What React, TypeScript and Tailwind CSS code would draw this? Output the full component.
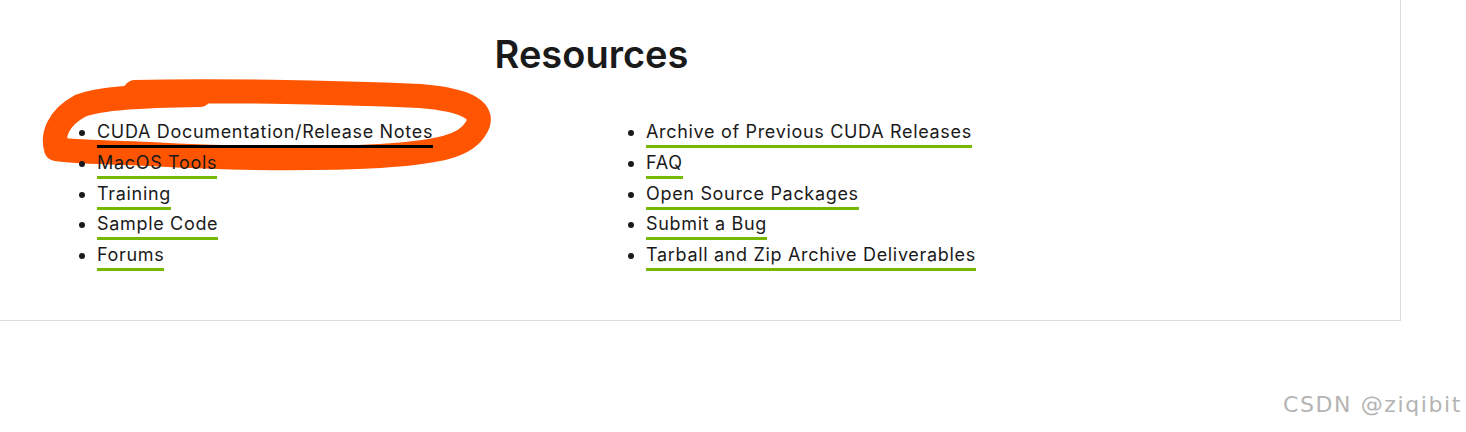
import React from "react";

const left = [
  "CUDA Documentation/Release Notes",
  "MacOS Tools",
  "Training",
  "Sample Code",
  "Forums",
];
const right = [
  "Archive of Previous CUDA Releases",
  "FAQ",
  "Open Source Packages",
  "Submit a Bug",
  "Tarball and Zip Archive Deliverables",
];

function List({ items, first }: { items: string[]; first?: boolean }) {
  return (
    <ul className="list-disc pl-[40px] text-[18px] tracking-[0.68px] text-[#1a1a1a]">
      {items.map((t, i) => (
        <li key={t} className="h-[30.75px] leading-[27px]">
          <a
            href="#"
            className={
              "inline-block leading-[27px] border-b-[3px] " +
              (first && i === 0 ? "border-black" : "border-[#76b900]")
            }
          >
            {t}
          </a>
        </li>
      ))}
    </ul>
  );
}

export default function App() {
  return (
    <div
      className="relative w-[1466px] h-[432px] bg-white overflow-hidden"
      style={{ fontFamily: "Inter, Roboto, 'Noto Sans', sans-serif" }}
    >
      <div className="w-[1401px] h-[321px] border-r border-b border-[#dddddd]">
        <div className="w-[1183px] pt-[30px] text-center">
          <h2 className="text-[38px] font-semibold leading-[48px] text-[#1a1a1a]">
            Resources
          </h2>
        </div>
        <div className="relative mt-[40px]">
          <svg
            className="absolute left-0 top-[-40px] z-0"
            width="520"
            height="120"
            viewBox="0 78 520 120"
          >
            <path
              d="M135 92 C 210 90, 330 92, 420 96 C 470 100, 486 112, 476 128 C 466 146, 440 152, 380 156 C 300 160, 220 158, 150 154 C 110 152, 70 152, 56 149 C 52 135, 58 118, 80 106 C 100 98, 140 96, 200 95"
              fill="none"
              stroke="#ff5500"
              strokeWidth="24"
              strokeLinecap="round"
              strokeLinejoin="round"
            />
          </svg>
          <div className="relative z-10 ml-[57px] grid grid-cols-[549px_549px]">
            <List items={left} first />
            <List items={right} />
          </div>
        </div>
      </div>
      <div
        className="absolute left-[1283px] top-[392px] text-[22px] leading-[26px] tracking-[1.6px] text-[#b4b4b4]"
        style={{ fontFamily: "'DejaVu Sans', sans-serif", textShadow: "0 0 1px #ffffff" }}
      >
        CSDN @ziqibit
      </div>
    </div>
  );
}
